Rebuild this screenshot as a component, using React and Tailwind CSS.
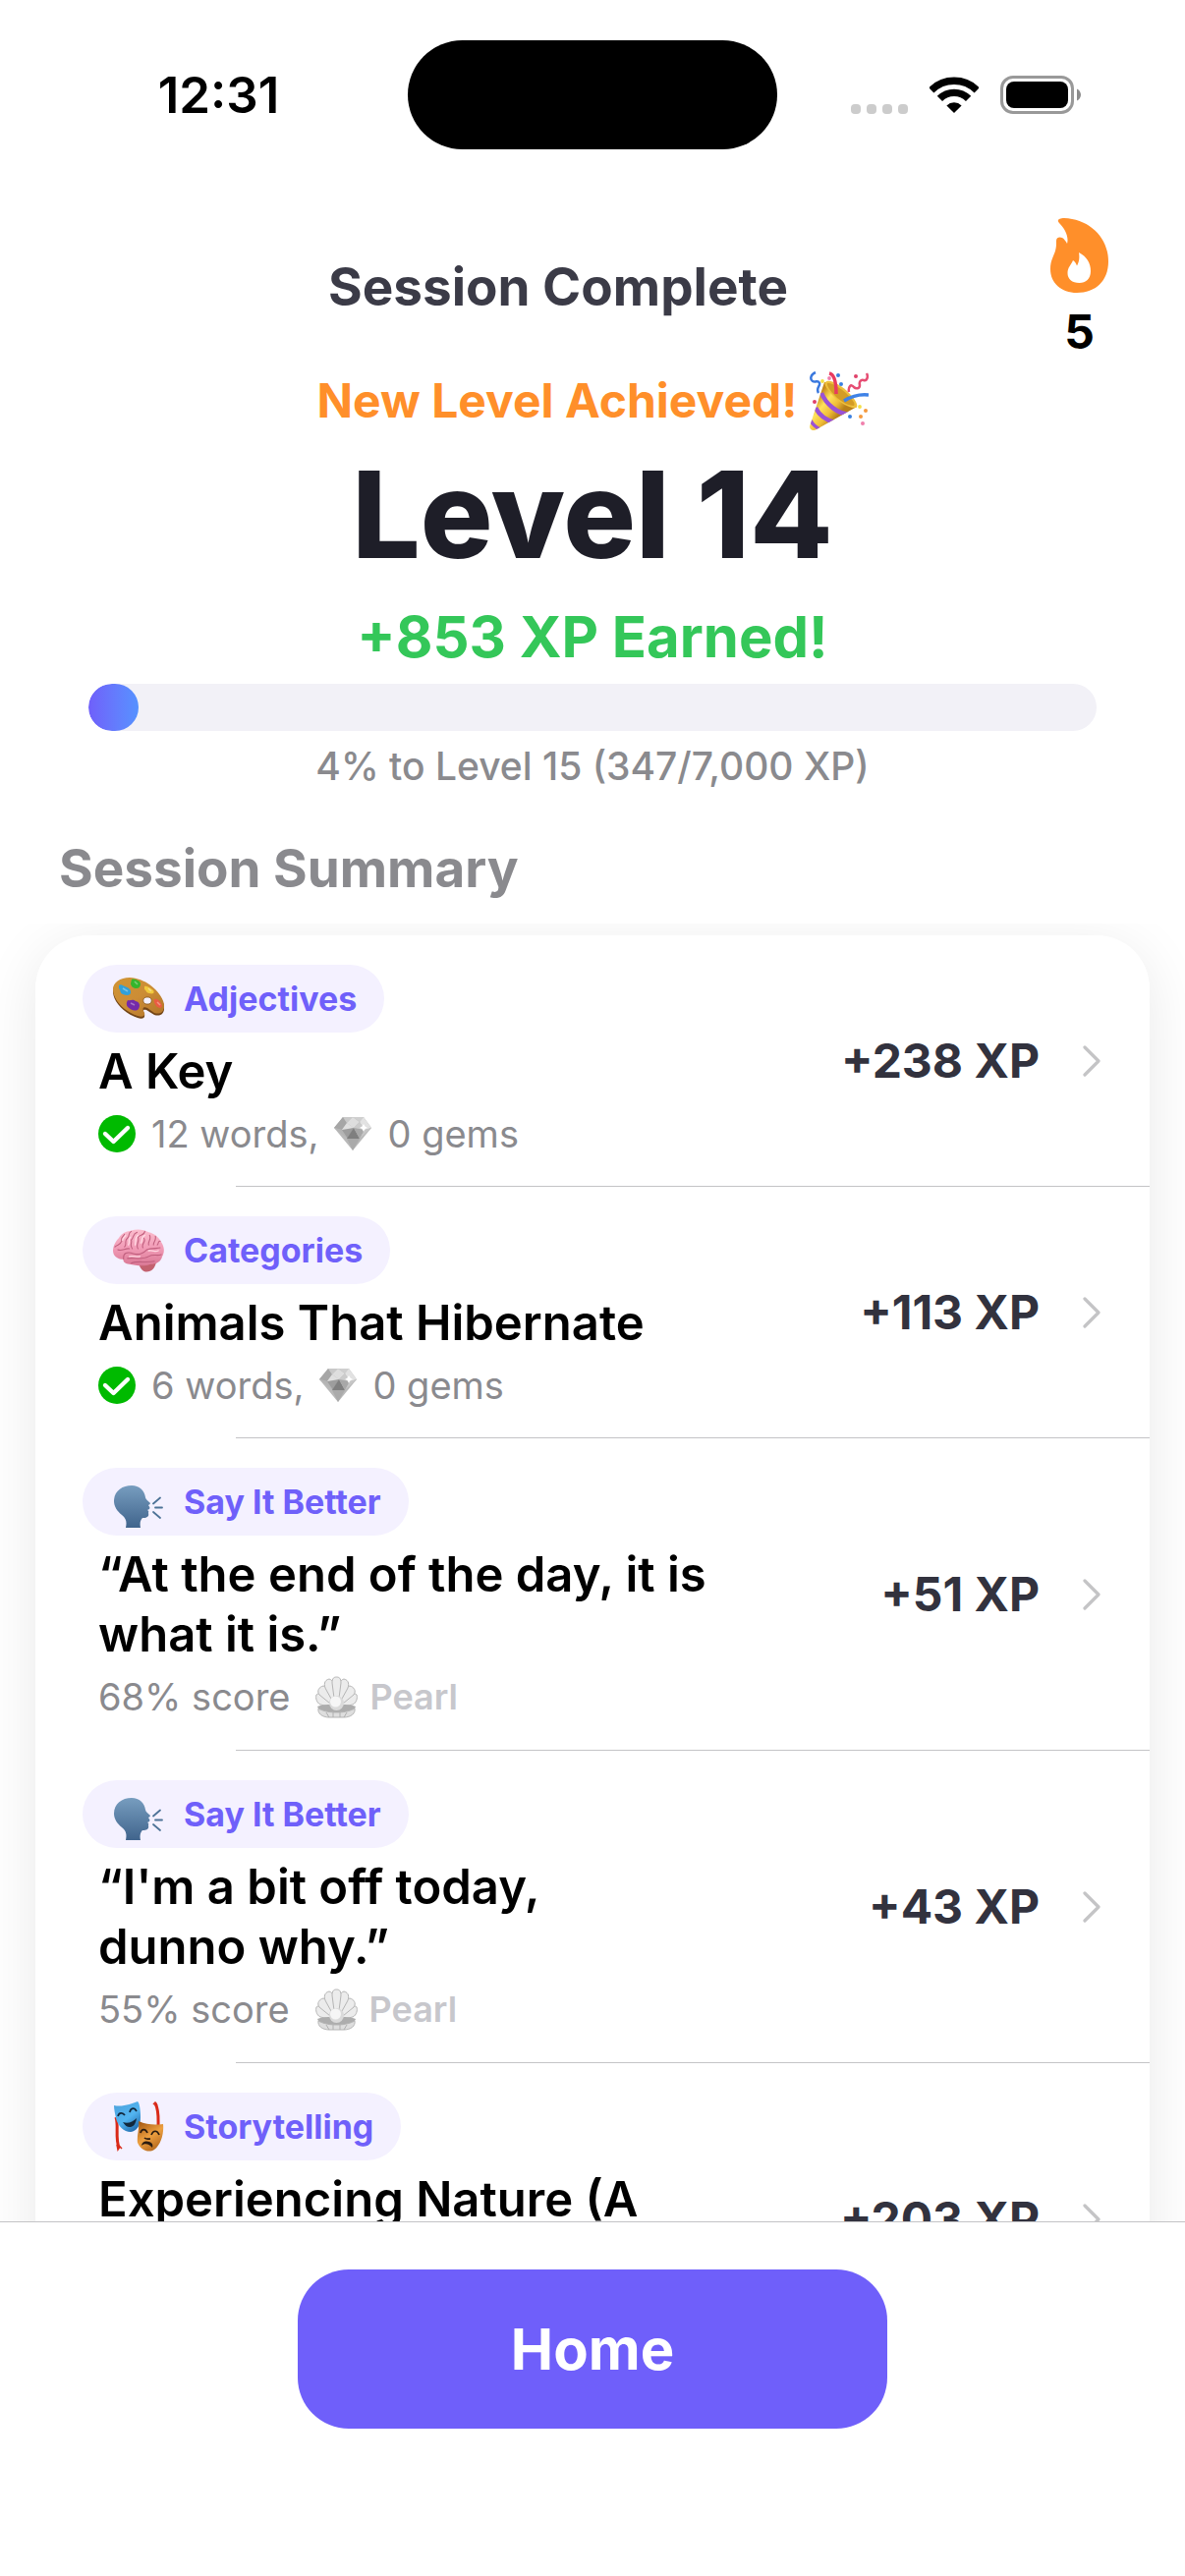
const sessions = [
  { category: 'Adjectives', icon: PaletteIcon, title: 'A Key', words: 12, gems: 0, xp: 238 },
  { category: 'Categories', icon: BrainIcon, title: 'Animals That Hibernate', words: 6, gems: 0, xp: 113 },
  { category: 'Say It Better', icon: SpeakingIcon, title: '“At the end of the day, it is\nwhat it is.”', score: 68, medal: 'Pearl', xp: 51, tall: true },
  { category: 'Say It Better', icon: SpeakingIcon, title: '“I\'m a bit off today,\ndunno why.”', score: 55, medal: 'Pearl', xp: 43, tall: true },
  { category: 'Storytelling', icon: MasksIcon, title: 'Experiencing Nature (A', xp: 203, tall: true },
]

function WifiIcon() {
  return (
    <svg width="50" height="37" viewBox="0 0 50 37" fill="none" aria-hidden="true">
      <path d="M1.8 13.8A33 33 0 0 1 48.2 13.8" stroke="#000" strokeWidth="7.4" />
      <path d="M10.4 22.4A20.6 20.6 0 0 1 39.6 22.4" stroke="#000" strokeWidth="7.4" />
      <path d="M17.4 29.4A11 11 0 0 1 32.6 29.4L25 37Z" fill="#000" />
    </svg>
  )
}

function BatteryIcon() {
  return (
    <svg width="82" height="39" viewBox="0 0 82 39" fill="none" aria-hidden="true">
      <rect x="1.5" y="1.5" width="72" height="36" rx="11.5" stroke="#999" strokeWidth="3" />
      <rect x="6" y="6" width="63" height="27" rx="8" fill="#000" />
      <path d="M78 13.5C80.500 14.500 82 17 82 19.500C82 22 80.500 24.500 78 25.500Z" fill="#8c8c8c" />
    </svg>
  )
}

function FlameIcon() {
  return (
    <svg width="59" height="76" viewBox="0 0 59 76" aria-hidden="true">
      <path fill="#ff8f2a" d="M14 0C40 1 59 20 59 44C59 64 46 76 27 76C11 76 0 66 0 52C0 40 6 37 6 26V23C6 19 10 19 12 20C14 21 16 24 17 26C19 19 15 11 9 5C6 2 9 0 14 0Z" />
      <path fill="#fff" d="M29 35C37 39 41 46 41 54C41 62 36 66 29.500 66C22 66 17.500 62 17.500 56C17.500 50 21 48 23 43C25 44 26 46 27 48.500C29 45 30 41 29 35Z" />
    </svg>
  )
}

function PartyIcon() {
  return (
    <svg width="60" height="60" viewBox="0 0 60 60" fill="none" aria-hidden="true">
      <defs>
        <linearGradient id="cone" x1="6" y1="28" x2="28" y2="46" gradientUnits="userSpaceOnUse">
          <stop stopColor="#c98a1c" />
          <stop offset=".35" stopColor="#ffe35a" />
          <stop offset=".7" stopColor="#f0bd38" />
          <stop offset="1" stopColor="#b8801a" />
        </linearGradient>
        <clipPath id="coneShape">
          <path d="M0 56L15 11C25 12 44 26 48 36L7 59C4 61 0 60 0 56Z" />
        </clipPath>
      </defs>
      <g clipPath="url(#coneShape)">
        <path d="M0 0H60V60H0Z" fill="url(#cone)" />
        <path d="M12 22C17 34 28 43 41 44" stroke="#9a52d6" strokeWidth="4.500" />
        <path d="M6 37C10 45 17 50 26 52" stroke="#9a52d6" strokeWidth="4.500" />
        <path d="M1 50C3 54 6 57 11 59" stroke="#9a52d6" strokeWidth="3.500" />
      </g>
      <path d="M16 11C20 7 32 14 40 22C48 30 50 36 47 37C42 38 32 33 25 26C18 19 14 13 16 11Z" fill="#eec03c" />
      <path d="M18 12C23 11 31 17 37 22C43 28 47 33 45 35C39 35 32 31 26 25C21 20 17 14 18 12Z" fill="#d39c26" />
      <path d="M20 2C25 3 27 10 27 23" stroke="#e83a5f" strokeWidth="3.500" />
      <path d="M60 24C51 23 43 25 35 30" stroke="#3f82e6" strokeWidth="3.500" />
      <path d="M6 1C1 3 0 8 3 10C6 12 9 8 10 12C11 15 6 17 9 22" stroke="#3a78de" strokeWidth="2.500" />
      <path d="M58 2C60 6 58 10 55 9C52 8 50 11 51 14C51 18 47 18 45 16C42 12 39 16 40 21" stroke="#e64d73" strokeWidth="2.500" />
      <g fill="#3a7fe0"><circle cx="29" cy="4" r="2" /><circle cx="32" cy="13" r="2" /><circle cx="41" cy="46" r="2" /></g>
      <g fill="#f3df45"><circle cx="13" cy="10" r="1.900" /><circle cx="51" cy="36" r="1.900" /></g>
      <g fill="#f59a3e"><circle cx="57" cy="40" r="2" /><circle cx="52" cy="46" r="2" /></g>
      <g fill="#f07fac"><circle cx="20" cy="7" r="1.900" /><circle cx="54" cy="53" r="2" /></g>
      <g fill="#e0416a"><circle cx="47" cy="5" r="2" /><circle cx="5" cy="31" r="2" /></g>
    </svg>
  )
}

function PaletteIcon() {
  return (
    <svg width="52" height="44" viewBox="0 0 52 44" aria-hidden="true">
      <defs>
        <linearGradient id="wood" x1="8" y1="2" x2="36" y2="42" gradientUnits="userSpaceOnUse">
          <stop stopColor="#cf9335" />
          <stop offset=".5" stopColor="#cc8d35" />
          <stop offset="1" stopColor="#b87a2c" />
        </linearGradient>
      </defs>
      <path fill="#734516" fillRule="evenodd" d="M0 14C0 6 7 1 17 1C34 2 49 15 52 29C53 37 48 40 42 38L34 33C31 32 30 33 32 37C33 41 30 43 25 41C12 37 0 25 0 14Z" />
      <path fill="url(#wood)" d="M0 12C0 5 7 0 17 0C34 1 49 14 52 27C53 35 48 38 42 36L35 31C31 29 29 31 32 36C33 39 30 41 25 39C12 35 0 23 0 12Z" />
      <ellipse cx="35" cy="23.500" rx="4.200" ry="3.600" fill="#f4f1ff" stroke="#8a5a20" strokeWidth=".8" />
      <path d="M6 8C8 6 10 8 12 9C15 10 19 12 18 16C16 19 13 18 10 17C7 16 8 13 6 11Z" fill="#31a0d8" />
      <path d="M19 2C21 1 24 2 27 4C29 6 28 11 24 11C21 11 18 9 18 6Z" fill="#36b52c" />
      <path d="M32 9C35 8 38 11 41 13C43 16 40 17 37 16C34 16 34 13 32 12Z" fill="#f1c93c" />
      <path d="M42 22C45 21 49 25 50 29C49 32 46 31 44 29C43 27 41 25 42 22Z" fill="#ea5c43" />
      <path d="M15 23C18 24 20 21 23 24C27 25 28 28 26 32C23 35 18 33 15 30C13 27 14 25 15 23Z" fill="#742aa9" />
      <path d="M10 11L15 14M22 4L25 7M36 11L39 14M45 25L48 28M18 26L22 28" stroke="#fff" strokeOpacity=".35" strokeWidth="1.500" fill="none" />
    </svg>
  )
}

function BrainIcon() {
  return (
    <svg width="52" height="44" viewBox="0 0 53 44" fill="none" aria-hidden="true">
      <defs>
        <linearGradient id="brain" x1="26" y1="0" x2="26" y2="38" gradientUnits="userSpaceOnUse">
          <stop stopColor="#fbbccd" />
          <stop offset=".5" stopColor="#f29cb7" />
          <stop offset="1" stopColor="#d97794" />
        </linearGradient>
      </defs>
      <path d="M27 36C31 35 39 34 45 33C44 40 40 44 35 44C31 44 28 40 27 36Z" fill="#c3616f" />
      <path fill="url(#brain)" d="M0 22C0 17 3 12 6 9C9 3 15 2 19 1C25-1 33 0 37 3C43 4 48 9 50 13C53 17 54 23 51 28C50 33 45 36 39 36C32 39 23 37 17 36C12 36 10 33 11 31C4 31 0 27 0 22Z" />
      <path d="M11 31C10 24 15 23 21 25C27 27 31 25 35 21C40 19 45 20 49 19M15 30C22 29 30 32 37 28C42 25 46 28 50 26M19 35C25 32 33 35 43 33M5 21C9 23 13 19 17 20M2 18C5 15 7 17 9 12C8 8 11 7 12 5M12 18C15 15 11 12 15 9C18 6 15 4 19 2M20 20C17 16 20 14 19 11C22 8 20 5 25 3M26 20C23 16 28 12 26 8C28 5 32 7 33 2M31 19C29 14 35 13 32 9M37 16C36 12 40 11 38 6M42 16C42 12 45 12 44 7M46 16C48 14 46 12 49 12" stroke="#c05f7e" strokeWidth="1.100" strokeLinecap="round" />
      <path d="M10 11C10 8 13 8 13 6M16 16C18 12 15 11 18 8M23 16C24 12 22 9 26 6M29 14C31 10 29 8 33 6M37 22C42 21 43 24 47 22M17 28C21 27 24 29 28 28" stroke="#ffd9e3" strokeWidth="1.400" strokeLinecap="round" />
    </svg>
  )
}

function SpeakingIcon() {
  return (
    <svg width="52" height="52" viewBox="-1 -9 52 52" fill="none" aria-hidden="true">
      <defs>
        <linearGradient id="head" x1="18" y1="0" x2="18" y2="43" gradientUnits="userSpaceOnUse">
          <stop stopColor="#779dbf" />
          <stop offset="1" stopColor="#40648c" />
        </linearGradient>
      </defs>
      <path fill="url(#head)" d="M18 0C26 0 31 5 32 12C32 14 35 16 37 18C37 19 35 20 35 20C36 22 37 22 36 24L34 25C36 26 35 27 35 28C36 32 33 33 29 33C27 35 26 38 27 43H12C13 38 13 34 8 30C3 26 0 21 0 16C0 6 8 0 18 0Z" />
      <path d="M40 18.500L47 12.500M42 22.500H49M40 27L47 33" stroke="#4d7397" strokeWidth="1.800" strokeLinecap="round" />
    </svg>
  )
}

function MasksIcon() {
  return (
    <svg width="52" height="51" viewBox="-1 0 52 51" fill="none" aria-hidden="true">
      <defs>
        <linearGradient id="comedy" x1="4" y1="4" x2="24" y2="30" gradientUnits="userSpaceOnUse">
          <stop stopColor="#4ea6e0" />
          <stop offset=".5" stopColor="#52b4f0" />
          <stop offset="1" stopColor="#1c63a6" />
        </linearGradient>
        <linearGradient id="tragedy" x1="26" y1="22" x2="44" y2="50" gradientUnits="userSpaceOnUse">
          <stop stopColor="#a85c16" />
          <stop offset=".5" stopColor="#eda040" />
          <stop offset="1" stopColor="#b0641a" />
        </linearGradient>
      </defs>
      <path d="M2 16C5 25 1 36 5 47M42 2C46 9 45 17 45 26" stroke="#d92a18" strokeWidth="3" />
      <path d="M3 44L4 49L6 46L8 48M40 3L42 1L44 4" stroke="#d92a18" strokeWidth="1.500" />
      <path d="M0 4C9 6 18 2 24 0C26 1 27 9 27 16C27 25 23 30 17 31C10 31 4 25 2 17C1 12 0 8 0 4Z" fill="url(#comedy)" />
      <path d="M4 15C5 11 9 11 11 14M16 11C17 6 21 6 23 10" stroke="#12283c" strokeWidth="1.700" />
      <path d="M9 21C14 23 19 21 23 17C22 24 19 26 16 26C13 26 11 24 9 21Z" fill="#12283c" />
      <path d="M25 20C34 24 42 24 50 23C51 32 48 44 41 49C35 53 27 49 24 42C23 35 26 29 25 20Z" fill="url(#tragedy)" />
      <path d="M27 32C28 28 32 27 34 32M38 34C40 29 44 29 46 34M31 37C33 39 36 38 37 38" stroke="#2b1c10" strokeWidth="1.700" />
      <path d="M28 45C29 40 33 40 36 41C39 42 40 44 39 47C36 43 31 42 28 45Z" fill="#2b1c10" />
    </svg>
  )
}

function CheckIcon() {
  return (
    <svg width="38" height="38" viewBox="0 0 38 38" fill="none" aria-hidden="true">
      <circle cx="19" cy="19" r="19" fill="#00ba00" />
      <path d="M7 19L15.500 27L30 13" stroke="#fff" strokeWidth="4.400" strokeLinecap="round" strokeLinejoin="round" />
    </svg>
  )
}

function GemIcon() {
  return (
    <svg width="38" height="34" viewBox="0 0 38 34" aria-hidden="true">
      <path d="M9 0H30L38 11L19 34L0 11Z" fill="#b9b9b9" />
      <path d="M9 0L13 6L8 13L0 11Z" fill="#a6a6a6" />
      <path d="M9 0H19L13 6Z" fill="#c9c9c9" />
      <path d="M19 0L13 6L20 11L26 5Z" fill="#dedede" />
      <path d="M19 0H30L26 5Z" fill="#cfcfcf" />
      <path d="M30 0L38 11L31 13L26 5Z" fill="#e2e2e2" />
      <path d="M13 6L8 13H14L20 11Z" fill="#e0e0e0" />
      <path d="M26 5L20 11L25 15L31 13Z" fill="#cbcbcb" />
      <path d="M0 11L8 13L14 22Z" fill="#b4b4b4" />
      <path d="M8 13L14 22L20 11Z" fill="#9d9d9d" />
      <path d="M20 11L13 22H26Z" fill="#7f7f7f" />
      <path d="M20 11L26 22L31 13Z" fill="#a8a8a8" />
      <path d="M38 11L31 13L26 22Z" fill="#c6c6c6" />
      <path d="M13 22H26L19 34Z" fill="#aaa" />
      <path d="M30 7L31.500 9.500L34 11L31.500 12L30 15L28.500 12L26 11L28.500 9.500Z" fill="#fff" />
    </svg>
  )
}

function PearlIcon() {
  return (
    <svg width="43" height="43" viewBox="0 0 43 43" aria-hidden="true">
      <g fill="#ececec" stroke="#b5b5b5" strokeWidth="1">
        <path d="M20 32L5 29C1 27 0 22 1 19C3 17 6 18 8 20Z" />
        <path d="M23 32L38 29C42 27 43 22 42 19C40 17 37 18 35 20Z" />
        <path d="M20 32L4 19C1 15 4 11 8 10C12 11 13 15 15 19Z" />
        <path d="M23 32L39 19C42 15 39 11 35 10C31 11 30 15 28 19Z" />
        <path d="M21 32L11 14C8 9 9 4 14 3C18 4 19 8 20 16Z" />
        <path d="M22 32L32 14C35 9 34 4 29 3C25 4 24 8 23 16Z" />
        <path d="M20 30L17 7C17 2 19 1 21.500 1C24 1 26 2 26 7L23 30Z" />
      </g>
      <path d="M2 31C8 28 35 28 41 31C40 34 38 36 35 37H8C5 36 3 34 2 31Z" fill="#adadad" />
      <path d="M3 33C7 35 12 37 21.500 37C31 37 36 35 40 33C41 38 36 42 29 42H14C7 42 2 38 3 33Z" fill="#dedede" stroke="#b5b5b5" strokeWidth="1" />
      <path d="M11 37L14 42M18 37V42M25 37V42M32 37L29 42" stroke="#b0b0b0" strokeWidth="1" />
      <circle cx="21.500" cy="27.500" r="7.500" fill="#dadada" />
      <circle cx="20.500" cy="26" r="5.500" fill="#f6f6f6" />
    </svg>
  )
}

function Chevron() {
  return (
    <svg width="18" height="32" viewBox="0 0 18 32" fill="none" aria-hidden="true">
      <path d="M2 2L16 16L2 30" stroke="#c4c4c6" strokeWidth="3.200" strokeLinecap="round" strokeLinejoin="round" />
    </svg>
  )
}

function StatusBar() {
  return (
    <div className="grid grid-cols-[1fr_376px_1fr] items-center pt-[41px] text-black">
      <span className="text-center pl-[30px] text-[51px] leading-[60px] font-semibold">12:31</span>
      <div className="h-[111px] rounded-full bg-black" />
      <div className="flex items-center justify-end gap-[22px] pr-[106px]">
        <div className="flex gap-1.5 pt-[28px]">
          <span className="size-2.5 rounded-[4px] bg-[#ccc]" />
          <span className="size-2.5 rounded-[4px] bg-[#ccc]" />
          <span className="size-2.5 rounded-[4px] bg-[#ccc]" />
          <span className="size-2.5 rounded-[4px] bg-[#ccc]" />
        </div>
        <WifiIcon />
        <BatteryIcon />
      </div>
    </div>
  )
}

function SessionDetail({ session }) {
  if (session.medal) {
    return (
      <p className="mt-[9px] flex items-center text-[38px] leading-[49px] text-[#8a8a8e]">
        {session.score}% score
        <span className="ml-[26px] flex items-center gap-3 text-[36px] font-semibold text-[#c7c7cc]">
          <PearlIcon />
          {session.medal}
        </span>
      </p>
    )
  }
  if (session.words) {
    return (
      <p className="mt-[9px] flex items-center gap-4 text-[38px] leading-[48px] text-[#8a8a8e]">
        <CheckIcon />
        {session.words} words,
        <GemIcon />
        {session.gems} gems
      </p>
    )
  }
  return null
}

function SessionRow({ session, last }) {
  const Icon = session.icon
  return (
    <li>
      <a href="#session" className={`flex justify-between pl-12 pr-[50px] pt-[30px] pb-[29px] ${session.tall ? 'min-h-[317px]' : ''}`}>
        <div>
          <div className="flex items-center w-fit h-[69px] rounded-full bg-[#f4f1ff] pl-[31px] pr-7 gap-5">
            <Icon />
            <span className="text-[34px] leading-[40px] font-bold text-[#6f60fa]">{session.category}</span>
          </div>
          <div className="pl-4">
            <h3 className="mt-[9px] text-[49px] leading-[61px] font-semibold text-black whitespace-pre-line">{session.title}</h3>
            <SessionDetail session={session} />
          </div>
        </div>
        <div className="flex items-center gap-[44px]">
          <span className="text-[48px] leading-[60px] font-bold text-[#32323e]">+{session.xp} XP</span>
          <Chevron />
        </div>
      </a>
      {!last && <hr className="ml-[204px] border-t border-[#c4c4c6]" />}
    </li>
  )
}

export default function App() {
  const current = 347
  const needed = 7000

  return (
    <div className="h-screen flex flex-col bg-white font-['Inter',sans-serif]">
      <StatusBar />

      <header className="mt-[70px] flex items-center pl-[67px] pr-[78px]">
        <h1 className="flex-1 text-center text-[53px] leading-[64px] font-bold text-[#3b3b47]">Session Complete</h1>
        <div className="flex flex-col items-center gap-4">
          <FlameIcon />
          <span className="text-[48px] leading-[48px] font-bold text-black">5</span>
        </div>
      </header>

      {/* Level and XP progress */}
      <section className="mt-4 px-[90px] flex flex-col items-center">
        <p className="flex items-center gap-3 text-[48px] leading-[60px] font-bold text-[#ff8f2a]">
          New Level Achieved!
          <PartyIcon />
        </p>
        <p className="mt-4 text-[123px] leading-[140px] font-extrabold text-[#1e1e28]">Level 14</p>
        <p className="mt-4 text-[58px] leading-[76px] font-bold text-[#34c759]">+853 XP Earned!</p>
        <div className="mt-2.5 w-full h-12 rounded-full bg-[#f2f1f7] overflow-hidden">
          <div
            className="h-full rounded-full bg-gradient-to-r from-[#6f5ffa] to-[#5592ff]"
            style={{ width: `${(current / needed) * 100}%` }}
          />
        </div>
        <p className="mt-3 text-[39px] leading-[48px] font-medium text-[#8a8a8e]">
          4% to Level 15 ({current}/{needed.toLocaleString('en-US')} XP)
        </p>
      </section>

      <h2 className="mt-12 pl-[60px] text-[53px] leading-[64px] font-bold text-[#8a8a8e]">Session Summary</h2>

      <main className="mt-6 flex-1 min-h-0 overflow-y-auto [scrollbar-width:none] px-9 pt-3">
        <ul className="rounded-[54px] bg-white shadow-[0_12px_60px_rgba(0,0,0,0.09)]">
          {sessions.map((session, i) => (
            <SessionRow key={session.title} session={session} last={i === sessions.length - 1} />
          ))}
        </ul>
      </main>

      <footer className="border-t border-[#c4c4c6] pt-12 pb-[150px] flex justify-center">
        <button className="w-[600px] h-[162px] rounded-[52px] bg-[#6f5ffa] text-white text-[58px] font-bold">Home</button>
      </footer>
    </div>
  )
}
